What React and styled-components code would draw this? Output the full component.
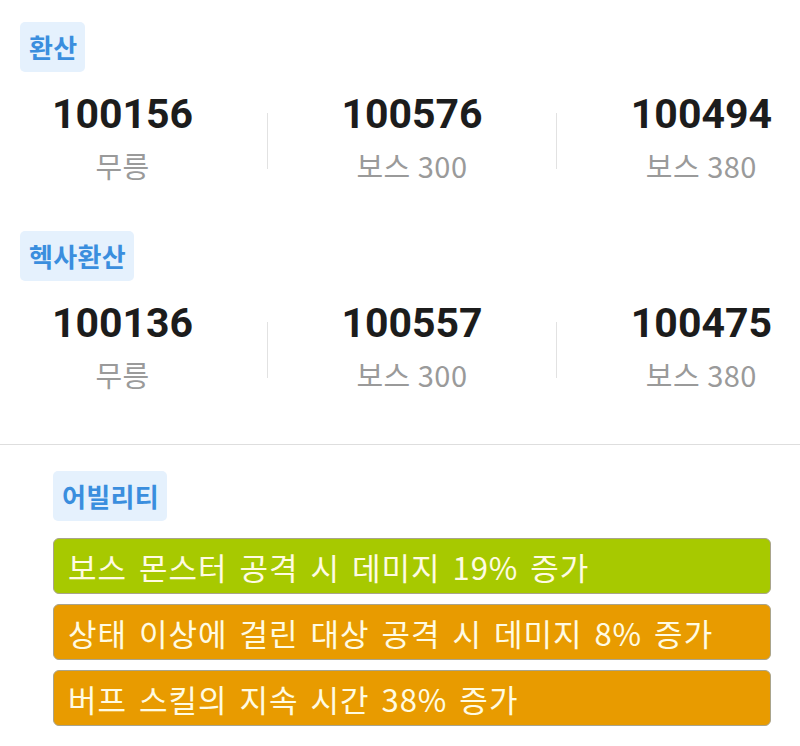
import styled, { createGlobalStyle } from "styled-components";

const GlobalStyle = createGlobalStyle`
  html, body {
    margin: 0;
    padding: 0;
    background: #ffffff;
  }
  body {
    font-family: 'Noto Sans CJK KR', 'Noto Sans', sans-serif;
  }
`

const conversions = [
  {
    title: '환산',
    stats: [
      { value: '100156', label: '무릉' },
      { value: '100576', label: '보스 300' },
      { value: '100494', label: '보스 380' },
    ],
  },
  {
    title: '헥사환산',
    stats: [
      { value: '100136', label: '무릉' },
      { value: '100557', label: '보스 300' },
      { value: '100475', label: '보스 380' },
    ],
  },
]

const abilities = [
  { text: '보스 몬스터 공격 시 데미지 19% 증가', tier: 'legendary' },
  { text: '상태 이상에 걸린 대상 공격 시 데미지 8% 증가', tier: 'unique' },
  { text: '버프 스킬의 지속 시간 38% 증가', tier: 'unique' },
]

export default function App() {
  return (
    <>
      <GlobalStyle />
      <Page>
        {conversions.map((section, i) => (
          <StatSection key={section.title} $first={i === 0}>
            <Badge>{section.title}</Badge>
            <StatRow>
              {section.stats.map((stat, j) => (
                <StatGroup key={stat.label}>
                  {j > 0 && <Divider />}
                  <Stat>
                    <StatValue>{stat.value}</StatValue>
                    <StatLabel>{stat.label}</StatLabel>
                  </Stat>
                </StatGroup>
              ))}
            </StatRow>
          </StatSection>
        ))}
        <Separator />
        <AbilitySection>
          <Badge>어빌리티</Badge>
          <AbilityList>
            {abilities.map((a) => (
              <AbilityBar key={a.text} $tier={a.tier}>{a.text}</AbilityBar>
            ))}
          </AbilityList>
        </AbilitySection>
      </Page>
    </>
  )
}

const Page = styled.div`
  width: 800px;
  display: flex;
  flex-direction: column;
`

const StatSection = styled.section`
  display: flex;
  flex-direction: column;
  align-items: flex-start;
  padding: 0 28px 0 20px;
  margin-top: ${(p) => (p.$first ? '22px' : '48px')};
`

const Badge = styled.div`
  display: inline-flex;
  align-items: center;
  height: 50px;
  padding: 0 8px 0 9px;
  border-radius: 5px;
  background: #e5f1fd;
  color: #3a8ede;
  font-family: 'Noto Sans CJK KR', sans-serif;
  font-weight: 700;
  font-size: 26px;
  letter-spacing: 0.3px;
  line-height: 1;
`

const StatRow = styled.div`
  align-self: stretch;
  display: flex;
  justify-content: space-between;
  align-items: center;
  margin-top: 21px;
  padding-left: 32px;
`

const StatGroup = styled.div`
  display: contents;
`

const Divider = styled.div`
  width: 1px;
  height: 56px;
  margin-top: 6px;
  background: #e2e2e2;
`

const Stat = styled.div`
  display: flex;
  flex-direction: column;
  align-items: center;
`

const StatValue = styled.div`
  font-family: Roboto, 'Liberation Sans', sans-serif;
  font-weight: 700;
  font-size: 41px;
  line-height: 42px;
  color: #1c1c1c;
`

const StatLabel = styled.div`
  margin-top: 12px;
  font-family: 'Noto Sans CJK KR', sans-serif;
  font-size: 29px;
  letter-spacing: 0.5px;
  line-height: 36px;
  color: #9a9a9a;
`

const Separator = styled.hr`
  width: 100%;
  margin: 52px 0 0;
  border: none;
  border-top: 1.5px solid #dedede;
`

const AbilitySection = styled.section`
  display: flex;
  flex-direction: column;
  align-items: flex-start;
  padding: 26px 29px 0 53px;
`

const AbilityList = styled.div`
  align-self: stretch;
  display: flex;
  flex-direction: column;
  gap: 10px;
  margin-top: 17px;
`

const AbilityBar = styled.div`
  display: flex;
  align-items: center;
  box-sizing: border-box;
  height: 56px;
  padding: 0 14px;
  border: 1.5px solid #a9a48c;
  border-radius: 6px;
  background: ${(p) => (p.$tier === 'legendary' ? '#a7c900' : '#e89b00')};
  color: #fffbe3;
  font-family: 'Noto Sans CJK KR', sans-serif;
  font-size: 31px;
  letter-spacing: 1px;
  word-spacing: 4px;
  line-height: 1;
`
